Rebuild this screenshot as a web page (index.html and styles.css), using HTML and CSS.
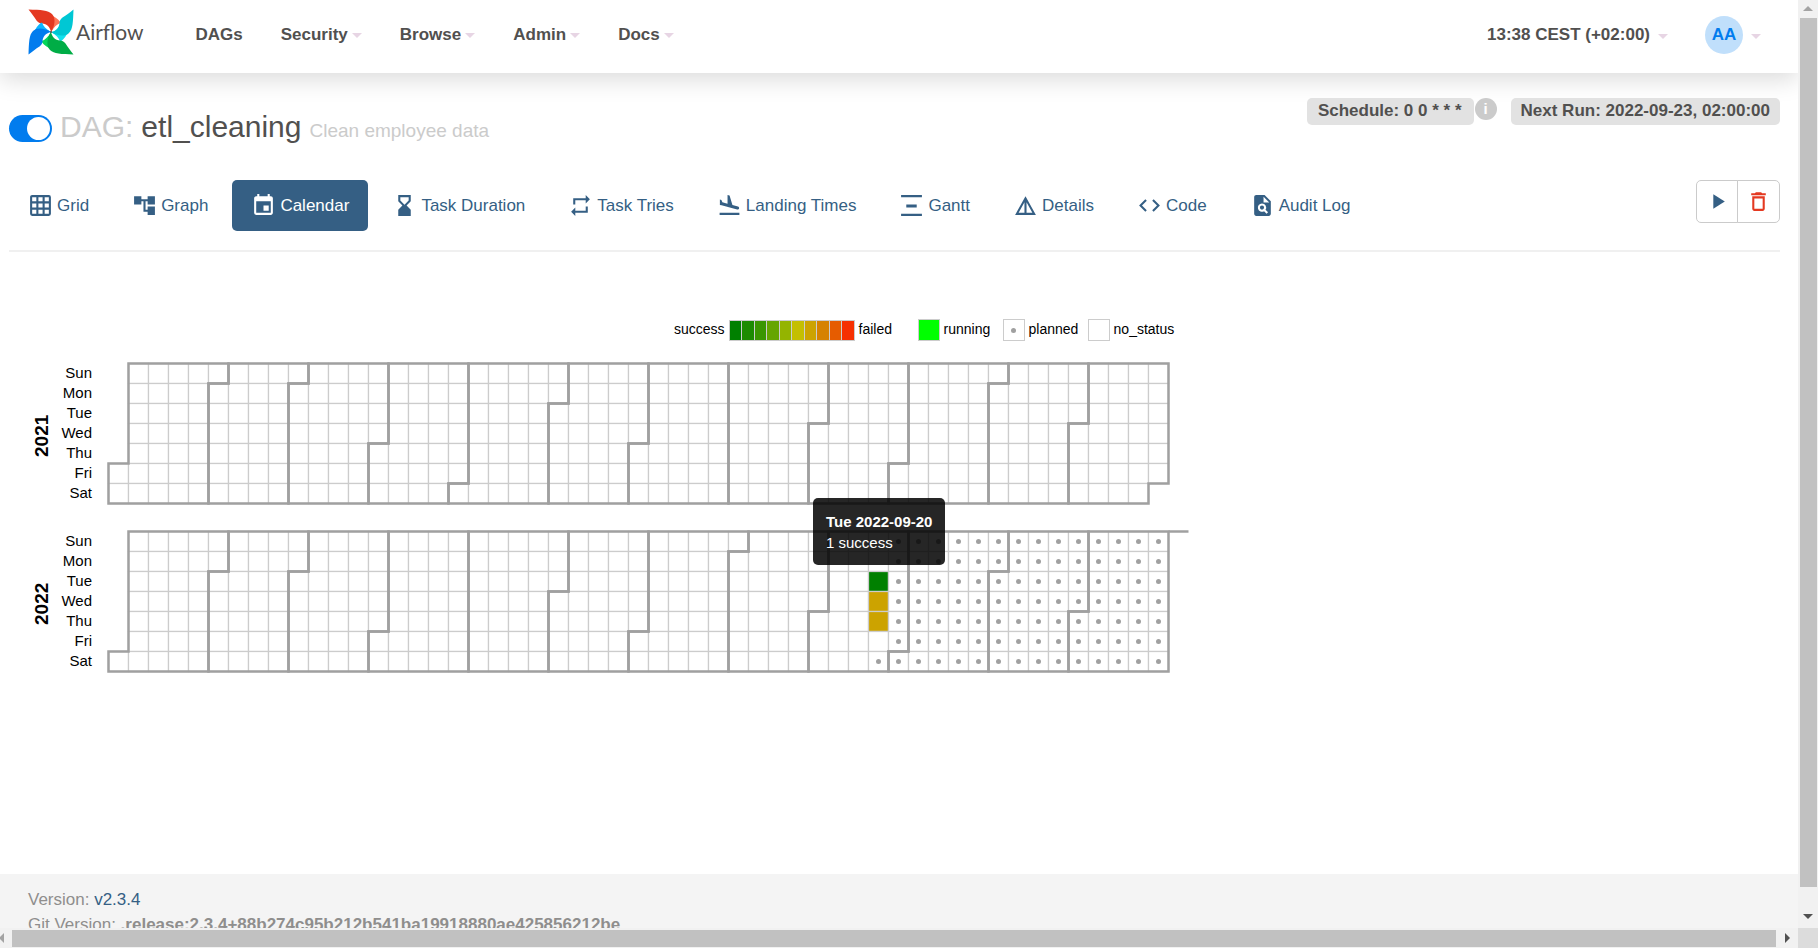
FILE: index.html
```html
<!DOCTYPE html>
<html lang="en">
<head>
<meta charset="utf-8">
<title>etl_cleaning - Calendar - Airflow</title>
<link rel="stylesheet" href="styles.css">
</head>
<body>
<svg class="sprite" aria-hidden="true">
  <symbol id="i-grid" viewBox="0 0 24 24"><path fill-rule="evenodd" d="M4 2h16a2 2 0 0 1 2 2v16a2 2 0 0 1-2 2H4a2 2 0 0 1-2-2V4c0-1.100.900-2 2-2zM4 4v4h4V4zm6 0v4h4V4zm6 0v4h4V4zM4 10v4h4v-4zm6 0v4h4v-4zm6 0v4h4v-4zM4 16v4h4v-4zm6 0v4h4v-4zm6 0v4h4v-4z"/></symbol>
  <symbol id="i-graph" viewBox="0 0 24 24"><path d="M22 11V3h-7v3H9V3H2v8h7V8h2v10h4v3h7v-8h-7v3h-2V8h2v3z"/></symbol>
  <symbol id="i-calendar" viewBox="0 0 24 24"><path d="M17 12h-5v5h5v-5zM16 1v2H8V1H6v2H5c-1.110 0-1.990.900-1.990 2L3 19a2 2 0 0 0 2 2h14c1.100 0 2-.900 2-2V5c0-1.100-.900-2-2-2h-1V1h-2zm3 18H5V8h14v11z"/></symbol>
  <symbol id="i-duration" viewBox="0 0 24 24"><path fill-rule="evenodd" d="M6 2v6h.010L6 8.010 10 12l-4 4 .010.010H6V22h12v-5.990h-.010L18 16l-4-4 4-3.990-.010-.010H18V2zm10 2v3.200l-4 4-4-4V4z"/></symbol>
  <symbol id="i-tries" viewBox="0 0 24 24"><path d="M7 7h10v3l4-4-4-4v3H5v6h2zm10 10H7v-3l-4 4 4 4v-3h12v-6h-2z"/></symbol>
  <symbol id="i-landing" viewBox="0 0 24 24"><path d="M2.500 19h19v2h-19zm7.180-5.730 4.350 1.160 5.310 1.420c.800.210 1.620-.260 1.840-1.060.210-.800-.260-1.620-1.060-1.840l-5.310-1.420-2.760-9.020L10.120 2v8.280L5.150 8.950l-.930-2.320-1.450-.390v5.170l1.600.430z"/></symbol>
  <symbol id="i-gantt" viewBox="0 0 24 24"><path d="M2 2h20v2H2zm5 9h10v3H7zM2 20h20v2H2z"/></symbol>
  <symbol id="i-details" viewBox="0 0 24 24"><path fill-rule="evenodd" d="M12 3 2 21h20zm1 5.920L18.600 19H13zm-2 0V19H5.400z"/></symbol>
  <symbol id="i-code" viewBox="0 0 24 24"><path d="M9.400 16.600 4.800 12l4.600-4.600L8 6l-6 6 6 6zm5.200 0 4.600-4.600-4.600-4.600L16 6l6 6-6 6z"/></symbol>
  <symbol id="i-audit" viewBox="0 0 24 24"><path fill-rule="evenodd" d="M14 2H6c-1.100 0-2 .900-2 2v16c0 1.100.900 2 2 2h12c1.100 0 2-.900 2-2V8zm-1 1.500L18.500 9H13zM11.500 10a4 4 0 0 1 3.400 6.100l2.400 2.400-1.400 1.400-2.400-2.400a4 4 0 1 1-2-7.500zm0 2a2 2 0 1 0 0 4 2 2 0 0 0 0-4z"/></symbol>
  <symbol id="i-play" viewBox="0 0 24 24"><path d="M8 5v14l11-7z"/></symbol>
  <symbol id="i-trash" viewBox="0 0 24 24"><path fill-rule="evenodd" d="M15.500 4l-1-1h-5l-1 1H5v2h14V4zM6 7v12c0 1.100.900 2 2 2h8c1.100 0 2-.900 2-2V7zm2 2h8v10H8z"/></symbol>
</svg>

<div class="window">
  <div class="viewport">
    <header class="navbar">
      <a class="brand" href="#">
        <svg class="pinwheel" viewBox="-23 -23 46 46" aria-hidden="true">
          <g><path fill="#ff7557" d="M0 0 2-16C6-14 9-11 9.500-9 6-8 3-5 0 0z"/><path fill="#e43921" d="M0 0C-1-5-4-8-9-8.500c-2 0-4-1-5.500-3-2.500-4-4.500-6.500-8-11C-10-22-3-22 1-18 5-14 4-6 0 0z"/></g>
          <g transform="rotate(90)"><path fill="#11e1ee" d="M0 0 2-16C6-14 9-11 9.500-9 6-8 3-5 0 0z"/><path fill="#00c7d4" d="M0 0C-1-5-4-8-9-8.500c-2 0-4-1-5.500-3-2.500-4-4.500-6.500-8-11C-10-22-3-22 1-18 5-14 4-6 0 0z"/></g>
          <g transform="rotate(180)"><path fill="#04d659" d="M0 0 2-16C6-14 9-11 9.500-9 6-8 3-5 0 0z"/><path fill="#00ad46" d="M0 0C-1-5-4-8-9-8.500c-2 0-4-1-5.500-3-2.500-4-4.500-6.500-8-11C-10-22-3-22 1-18 5-14 4-6 0 0z"/></g>
          <g transform="rotate(270)"><path fill="#0cb6ff" d="M0 0 2-16C6-14 9-11 9.500-9 6-8 3-5 0 0z"/><path fill="#017cee" d="M0 0C-1-5-4-8-9-8.500c-2 0-4-1-5.500-3-2.500-4-4.500-6.500-8-11C-10-22-3-22 1-18 5-14 4-6 0 0z"/></g>
          <circle r="1" fill="#51504f"/>
        </svg>
        <span class="brand-name">Airflow</span>
      </a>
      <nav class="menu">
        <a href="#">DAGs</a>
        <a href="#">Security<span class="caret"></span></a>
        <a href="#">Browse<span class="caret"></span></a>
        <a href="#">Admin<span class="caret"></span></a>
        <a href="#">Docs<span class="caret"></span></a>
      </nav>
      <div class="account">
        <a class="clock" href="#">13:38 CEST (+02:00)<span class="caret"></span></a>
        <a class="user" href="#"><span class="avatar">AA</span><span class="caret"></span></a>
      </div>
    </header>

    <main class="content">
      <div class="heading">
        <h3 class="title">
          <input class="switch" type="checkbox" checked aria-label="Pause or unpause DAG">
          <span class="muted">DAG:</span>
          <span>etl_cleaning</span>
          <small class="muted">Clean employee data</small>
        </h3>
        <div class="badges">
          <a class="badge schedule" href="#">Schedule: 0 0 * * *</a>
          <span class="info">i</span>
          <span class="badge">Next Run: 2022-09-23, 02:00:00</span>
        </div>
      </div>

      <div class="toolbar">
        <nav class="tabs">
          <a href="#"><svg><use href="#i-grid"/></svg>Grid</a>
          <a href="#"><svg><use href="#i-graph"/></svg>Graph</a>
          <a class="active" href="#"><svg><use href="#i-calendar"/></svg>Calendar</a>
          <a href="#"><svg><use href="#i-duration"/></svg>Task Duration</a>
          <a href="#"><svg><use href="#i-tries"/></svg>Task Tries</a>
          <a href="#"><svg><use href="#i-landing"/></svg>Landing Times</a>
          <a href="#"><svg><use href="#i-gantt"/></svg>Gantt</a>
          <a href="#"><svg><use href="#i-details"/></svg>Details</a>
          <a href="#"><svg><use href="#i-code"/></svg>Code</a>
          <a href="#"><svg><use href="#i-audit"/></svg>Audit Log</a>
        </nav>
        <div class="actions">
          <button type="button" aria-label="Trigger DAG"><svg><use href="#i-play"/></svg></button>
          <button type="button" class="danger" aria-label="Delete DAG"><svg><use href="#i-trash"/></svg></button>
        </div>
      </div>

      <section class="calendar">
        <div class="legend">
          <span class="name first">success</span>
          <span class="scale"><i class="s0"></i><i class="s1"></i><i class="s2"></i><i class="s3"></i><i class="s4"></i><i class="s5"></i><i class="s6"></i><i class="s7"></i><i class="s8"></i><i class="s9"></i></span>
          <span class="name">failed</span>
          <span class="swatch running"></span><span class="name">running</span>
          <span class="swatch planned"></span><span class="name">planned</span>
          <span class="swatch"></span><span class="name">no_status</span>
        </div>
        <div class="years">
          <div class="year">
            <h4 class="year-name">2021</h4>
            <ul class="days"><li>Sun</li><li>Mon</li><li>Tue</li><li>Wed</li><li>Thu</li><li>Fri</li><li>Sat</li></ul>
            <svg class="cells" data-year="2021" width="1085" height="145" viewBox="-2 -2 868 116"></svg>
          </div>
          <div class="year">
            <h4 class="year-name">2022</h4>
            <ul class="days"><li>Sun</li><li>Mon</li><li>Tue</li><li>Wed</li><li>Thu</li><li>Fri</li><li>Sat</li></ul>
            <svg class="cells" data-year="2022" width="1085" height="145" viewBox="-2 -2 868 116"></svg>
          </div>
          <div class="tooltip" role="tooltip"><strong>Tue 2022-09-20</strong><br>1 success</div>
        </div>
      </section>
    </main>

    <footer class="footer">
      <div>Version: <a href="#">v2.3.4</a></div>
      <div>Git Version: <strong>.release:2.3.4+88b274c95b212b541ba19918880ae425856212be</strong></div>
    </footer>
  </div>

  <div class="scroll vertical">
    <span class="arrow up"></span><span class="thumb"></span><span class="arrow down"></span>
  </div>
  <div class="scroll horizontal">
    <span class="arrow left"></span><span class="thumb"></span><span class="arrow right"></span>
  </div>
  <div class="corner"></div>
</div>
<script src="calendar.js"></script>
</body>
</html>
```
FILE: styles.css
```css
* { box-sizing: border-box; }
body { margin: 0; background: #fff; color: #51504f; font: 17px/25px "Liberation Sans", Arial, sans-serif; }
a { color: inherit; text-decoration: none; }
.sprite { display: none; }

.window { display: grid; grid-template-columns: 1fr 20px; grid-template-rows: 1fr 20px; height: 100vh; overflow: hidden; }
.viewport { display: flex; flex-direction: column; min-width: 0; min-height: 0; overflow: hidden; }

.navbar { display: flex; flex: none; align-items: flex-start; height: 73px; padding: 0 37px 0 28px; box-shadow: 0 6px 25px rgba(0, 0, 0, .15); }
.brand { display: flex; align-items: center; height: 64px; }
.pinwheel { width: 46px; height: 46px; }
.brand-name { margin-left: 2px; font: 21px/30px Lato, sans-serif; }
.menu { display: flex; gap: 38px; margin-left: 52px; font-weight: bold; line-height: 69px; }
.menu a, .account a { display: flex; align-items: center; }
.caret { width: 0; height: 0; margin: 2px 0 0 4px; border: 5px solid transparent; border-top-color: #e7d5e4; border-bottom: 0; }
.account { display: flex; gap: 37px; margin-left: auto; font-weight: bold; line-height: 70px; }
.account .caret { margin-left: 8px; }
.avatar { width: 38px; height: 38px; border-radius: 50%; background: #c0dffb; color: #017cee; line-height: 38px; text-align: center; }

.content { flex: none; padding: 25px 18px 0 9px; }
.heading { display: flex; justify-content: space-between; align-items: flex-start; height: 82px; }
.title { display: flex; align-items: baseline; gap: 8px; margin: 11px 0 0; font-size: 30px; line-height: 36px; font-weight: normal; }
.title small { font-size: 19px; }
.muted { color: #cbcbcb; }
.switch { appearance: none; align-self: center; width: 43px; height: 27px; margin: 0 0 2px; padding: 2px; border-radius: 14px; background: #017cee; }
.switch::before { content: ""; display: block; width: 23px; height: 23px; margin-left: auto; border-radius: 50%; background: #fff; }
.badges { display: flex; align-items: flex-start; }
.badge { padding: 0 12px 2px 11px; border-radius: 5px; background: #e2e2e2; font-weight: bold; }
.badge:last-child { margin-left: 14px; padding: 0 10px 2px; }
.info { width: 22px; height: 22px; margin-left: 1px; border-radius: 50%; background: #cbcbcb; color: #fff; font: bold 15px/21px "Liberation Sans", Arial, sans-serif; text-align: center; }

.toolbar { display: flex; justify-content: space-between; align-items: flex-start; padding-bottom: 19px; border-bottom: 2px solid #f0f0f0; }
.tabs { display: flex; gap: 5px; color: #355f84; }
.tabs a { display: flex; align-items: center; gap: 4px; height: 51px; padding: 0 19px; border-radius: 5px; }
.tabs svg { width: 25px; height: 25px; fill: currentColor; }
.tabs .active { background: #355f84; color: #fff; }
.actions { display: flex; }
.actions button { display: flex; align-items: center; justify-content: center; width: 42px; height: 43px; padding: 0 0 1px; border: 1px solid #cbcbcb; border-radius: 5px 0 0 5px; background: #fff; color: #355f84; }
.actions svg { width: 25px; height: 25px; fill: currentColor; }
.actions .danger { width: 43px; margin-left: -1px; border-radius: 0 5px 5px 0; color: #e43921; }

.calendar { margin-top: 67px; color: #000; }
.legend { display: flex; align-items: center; height: 22px; padding-left: 665px; font-size: 14px; line-height: 20px; }
.scale { display: flex; width: 126px; height: 21px; margin: 0 4px; border: 1px solid #ccc; }
.scale i { flex: 1; border-right: 1px solid #ccc; }
.scale i:last-child { border-right: 0; }
.s0 { background: #008000; }
.s1 { background: #1c8b00; }
.s2 { background: #3a9600; }
.s3 { background: #65a500; }
.s4 { background: #94b400; }
.s5 { background: #c4bf00; }
.s6 { background: #cca300; }
.s7 { background: #d68200; }
.s8 { background: #e65c00; }
.s9 { background: #f63000; }
.swatch { display: grid; place-items: center; width: 22px; height: 22px; margin-right: 4px; border: 1px solid #ccc; }
.running { background: #0f0; }
.planned::before { content: ""; width: 5px; height: 5px; border-radius: 50%; background: #a0a0a0; }
.name { width: 59px; padding-bottom: 2px; }
.name.first { width: auto; }

.years { position: relative; display: flex; flex-direction: column; gap: 23px; margin-top: 20px; }
.year { display: grid; grid-template-columns: 50px 33px 1fr; height: 145px; }
.year-name { width: 22px; margin: 4px 0 0 22px; writing-mode: vertical-rl; transform: rotate(180deg); font-size: 19px; line-height: 22px; text-align: center; }
.days { margin: 2px 0 0; padding: 0; list-style: none; font-size: 15px; line-height: 20px; text-align: right; }
.cells { display: block; margin-left: 14px; }
.day { fill: #fff; stroke: #ccc; }
.success { fill: #008000; }
.mixed { fill: #cca300; }
.dot { fill: #a0a0a0; }
.month { fill: none; stroke: #a0a0a0; stroke-width: 2; }
.tooltip { position: absolute; left: 804px; top: 137px; padding: 13px 13px 12px; border-radius: 5px; background: rgba(0, 0, 0, .85); color: #fff; font-size: 15px; line-height: 21px; }

.footer { flex: none; margin-top: auto; height: 54px; padding: 13px 28px 0; background: #f4f4f4; color: #8f8e8d; }
.footer a { color: #355f84; }
.footer div { white-space: nowrap; }

.scroll { display: flex; align-items: center; background: #f1f1f1; }
.vertical { flex-direction: column; }
.thumb { background: #c1c1c1; }
.vertical .thumb { flex: 1; width: 17px; margin-bottom: 27px; }
.horizontal .thumb { flex: 1; height: 17px; }
.arrow { border: 5px solid transparent; }
.up { margin: 6px 0 7px; border-top: 0; border-bottom-color: #a3a3a3; }
.down { margin-bottom: 9px; border-bottom: 0; border-top-color: #505050; }
.left { margin: 0 8px 0 -1px; border-left: 0; border-right-color: #a3a3a3; }
.right { margin: 0 8px 0 9px; border-right: 0; border-left-color: #505050; }
.corner { background: #dcdcdc; }
```
FILE: calendar.js
```js
const CELL = 16;
const DAY_MS = 86400000;
const NS = "http://www.w3.org/2000/svg";
const PLANNED_FROM = Date.UTC(2022, 8, 24);
const RUNS = { "2022-09-20": "success", "2022-09-21": "mixed", "2022-09-22": "mixed" };

function add(svg, tag, attrs) {
  const el = document.createElementNS(NS, tag);
  for (const name in attrs) el.setAttribute(name, attrs[name]);
  svg.appendChild(el);
}

function place(time, year) {
  const start = Date.UTC(year, 0, 1);
  const offset = new Date(start).getUTCDay();
  return {
    week: Math.floor(((time - start) / DAY_MS + offset) / 7),
    day: new Date(time).getUTCDay()
  };
}

document.querySelectorAll(".cells").forEach(svg => {
  const year = Number(svg.dataset.year);
  for (let t = Date.UTC(year, 0, 1); t < Date.UTC(year + 1, 0, 1); t += DAY_MS) {
    const { week, day } = place(t, year);
    const state = RUNS[new Date(t).toISOString().slice(0, 10)] || "";
    add(svg, "rect", { class: "day " + state, x: week * CELL, y: day * CELL, width: CELL, height: CELL });
    if (t >= PLANNED_FROM) {
      add(svg, "circle", { class: "dot", cx: week * CELL + CELL / 2, cy: day * CELL + CELL / 2, r: 2 });
    }
  }
  for (let m = 0; m < 12; m++) {
    const a = place(Date.UTC(year, m, 1), year);
    const b = place(Date.UTC(year, m + 1, 0), year);
    add(svg, "path", {
      class: "month",
      d: `M${(a.week + 1) * CELL} ${a.day * CELL}H${a.week * CELL}V${7 * CELL}H${b.week * CELL}V${(b.day + 1) * CELL}H${(b.week + 1) * CELL}V0H${(a.week + 1) * CELL}Z`
    });
  }
  const next = place(Date.UTC(year + 1, 0, 1), year);
  if (next.day === 0) {
    add(svg, "path", { class: "month", d: `M${next.week * CELL} 0H${(next.week + 1) * CELL}` });
  }
});
```
